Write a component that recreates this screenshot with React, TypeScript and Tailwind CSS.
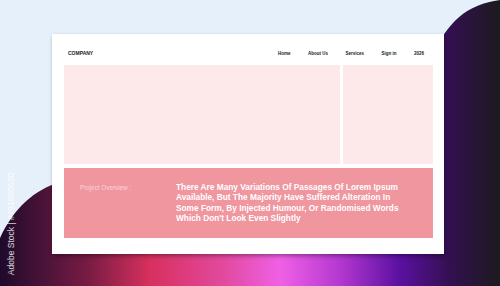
const navItems = ["Home", "About Us", "Services", "Sign in", "2026"];

const Backdrop = () => (
  <svg
    className="absolute inset-0 h-full w-full"
    viewBox="0 0 500 286"
    preserveAspectRatio="none"
  >
    <defs>
      <linearGradient id="blob" x1="0" y1="0" x2="1" y2="0">
        <stop offset="0" stopColor="#1e0a2c" />
        <stop offset="0.18" stopColor="#7a1c44" />
        <stop offset="0.3" stopColor="#d8305e" />
        <stop offset="0.45" stopColor="#e24aa0" />
        <stop offset="0.56" stopColor="#f060e6" />
        <stop offset="0.68" stopColor="#b438d0" />
        <stop offset="0.8" stopColor="#5a10a0" />
        <stop offset="0.9" stopColor="#331050" />
        <stop offset="1" stopColor="#1c1a1e" />
      </linearGradient>
    </defs>
    <path
      d="M0,238 C14,208 34,190 60,182 L432,58 C446,22 468,4 500,0 L500,286 L0,286 Z"
      fill="url(#blob)"
    />
  </svg>
);

export default function App() {
  return (
    <div className="relative h-[286px] w-[500px] overflow-hidden bg-[#e5f0fa] font-['Liberation_Sans',Arial,sans-serif]">
      <Backdrop />
      <div className="relative pl-[52px] pt-[34px]">
        <div className="flex h-[220px] w-[392px] flex-col bg-white shadow-[1px_2px_4px_rgba(0,0,0,0.35)]">
          <div className="flex h-[31px] items-start pl-[16px] pr-[20px] pt-[16px]">
            <span className="text-[5px] font-bold leading-[6px] text-[#222]">COMPANY</span>
            <nav className="ml-auto flex gap-[17.5px] pt-[0.5px]">
              {navItems.map((n) => (
                <span key={n} className="text-[4.5px] font-bold leading-[6px] text-[#222]">
                  {n}
                </span>
              ))}
            </nav>
          </div>
          <div className="flex flex-col gap-[4px] pl-[12px] pr-[11px]">
            <div className="flex h-[99px] gap-[3px]">
              <div className="w-[276px] bg-[#fde8ea]" />
              <div className="flex-1 bg-[#fde8ea]" />
            </div>
            <div className="flex h-[70px] bg-[#f0969f] pl-[16px] pt-[14px]">
              <p className="w-[96px] pt-[0.5px] text-[6.3px] text-[#fcd3d8]">
                Project Overview :
              </p>
              <p className="text-[8.3px] font-bold leading-[10.3px] text-white">
                There Are Many Variations Of Passages Of Lorem Ipsum
                <br />
                Available, But The Majority Have Suffered Alteration In
                <br />
                Some Form, By Injected Humour, Or Randomised Words
                <br />
                Which Don't Look Even Slightly
              </p>
            </div>
          </div>
        </div>
      </div>
      <span className="absolute left-[11px] top-[224px] origin-center -translate-x-1/2 -translate-y-1/2 -rotate-90 whitespace-nowrap text-[8.5px] text-white/80">
        Adobe Stock | #791980520
      </span>
    </div>
  );
}
